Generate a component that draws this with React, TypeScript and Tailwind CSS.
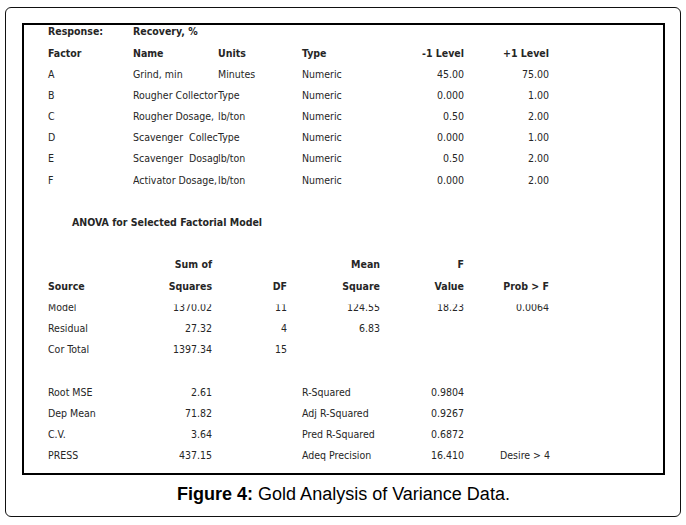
import React from 'react';

type Cell = { text: string; w: string; right?: boolean; bold?: boolean; clip?: boolean };

const factors = [
  ['A', 'Grind, min', 'Minutes', 'Numeric', '45.00', '75.00'],
  ['B', 'Rougher Collector', 'Type', 'Numeric', '0.000', '1.00'],
  ['C', 'Rougher Dosage,', 'lb/ton', 'Numeric', '0.50', '2.00'],
  ['D', 'Scavenger  Collector', 'Type', 'Numeric', '0.000', '1.00'],
  ['E', 'Scavenger  Dosage,', 'lb/ton', 'Numeric', '0.50', '2.00'],
  ['F', 'Activator Dosage,', 'lb/ton', 'Numeric', '0.000', '2.00'],
];

const anova = [
  ['Model', '1370.02', '11', '124.55', '18.23', '0.0064'],
  ['Residual', '27.32', '4', '6.83', '', ''],
  ['Cor Total', '1397.34', '15', '', '', ''],
];

const stats = [
  ['Root MSE', '2.61', 'R-Squared', '0.9804', ''],
  ['Dep Mean', '71.82', 'Adj R-Squared', '0.9267', ''],
  ['C.V.', '3.64', 'Pred R-Squared', '0.6872', ''],
  ['PRESS', '437.15', 'Adeq Precision', '16.410', 'Desire > 4'],
];

const Row = ({ cells, cut }: { cells: Cell[]; cut?: boolean }) => (
  <div className="flex h-[21.2px] items-center pl-[24px]">
    {cells.map((c, i) => (
      <div
        key={i}
        className={`${c.w} shrink-0 whitespace-pre ${c.right ? 'text-right' : 'text-left'} ${c.bold ? 'font-bold' : ''} ${c.clip ? 'overflow-hidden' : ''}`}
      >
        <span className={cut ? 'inline-block leading-[14px] [clip-path:inset(4.5px_0_0_0)]' : ''}>{c.text}</span>
      </div>
    ))}
  </div>
);

const Blank = () => <div className="h-[21.2px]" />;

const App: React.FC = () => {
  const top = ['w-[85px]', 'w-[85px]', 'w-[84px]', 'w-[90px]', 'w-[72px]', 'w-[85px]'];
  const mid = ['w-[85px]', 'w-[79px]', 'w-[75px]', 'w-[93px]', 'w-[84px]', 'w-[85px]'];

  return (
    <div className="w-[686px] h-[525px] bg-white pt-[7px] pl-[5px]">
      <div className="w-[676px] h-[510px] border border-[#111] rounded-[6px] pt-[15px] pl-[16px]">
        {/* tabla del informe */}
        <div
          className="w-[643px] h-[452px] border-2 border-black overflow-hidden text-[10.5px] text-[#262626]"
          style={{ fontFamily: '"DejaVu Sans Condensed", "Liberation Sans", sans-serif' }}
        >
          <div className="-mt-[3.4px]">
            <Row
              cells={[
                { text: 'Response:', w: top[0], bold: true },
                { text: 'Recovery, %', w: top[1], bold: true },
              ]}
            />
            <Row
              cells={[
                { text: 'Factor', w: top[0], bold: true },
                { text: 'Name', w: top[1], bold: true },
                { text: 'Units', w: top[2], bold: true },
                { text: 'Type', w: top[3], bold: true },
                { text: '-1 Level', w: top[4], bold: true, right: true },
                { text: '+1 Level', w: top[5], bold: true, right: true },
              ]}
            />
            {factors.map((f) => (
              <Row
                key={f[0]}
                cells={[
                  { text: f[0], w: top[0] },
                  { text: f[1], w: top[1], clip: true },
                  { text: f[2], w: top[2] },
                  { text: f[3], w: top[3] },
                  { text: f[4], w: top[4], right: true },
                  { text: f[5], w: top[5], right: true },
                ]}
              />
            ))}
            <Blank />
            <div className="flex h-[21.2px] items-center pl-[48px] font-bold">ANOVA for Selected Factorial Model</div>
            <Blank />
            <Row
              cells={[
                { text: '', w: mid[0] },
                { text: 'Sum of', w: mid[1], bold: true, right: true },
                { text: '', w: mid[2] },
                { text: 'Mean', w: mid[3], bold: true, right: true },
                { text: 'F', w: mid[4], bold: true, right: true },
              ]}
            />
            <Row
              cells={[
                { text: 'Source', w: mid[0], bold: true },
                { text: 'Squares', w: mid[1], bold: true, right: true },
                { text: 'DF', w: mid[2], bold: true, right: true },
                { text: 'Square', w: mid[3], bold: true, right: true },
                { text: 'Value', w: mid[4], bold: true, right: true },
                { text: 'Prob > F', w: mid[5], bold: true, right: true },
              ]}
            />
            {anova.map((a, i) => (
              <Row
                key={a[0]}
                cut={i === 0}
                cells={[
                  { text: a[0], w: mid[0] },
                  { text: a[1], w: mid[1], right: true },
                  { text: a[2], w: mid[2], right: true },
                  { text: a[3], w: mid[3], right: true },
                  { text: a[4], w: mid[4], right: true },
                  { text: a[5], w: mid[5], right: true },
                ]}
              />
            ))}
            <Blank />
            {stats.map((s) => (
              <Row
                key={s[0]}
                cells={[
                  { text: s[0], w: 'w-[85px]' },
                  { text: s[1], w: 'w-[79px]', right: true },
                  { text: '', w: 'w-[90px]' },
                  { text: s[2], w: 'w-[90px]' },
                  { text: s[3], w: 'w-[72px]', right: true },
                  { text: s[4], w: 'w-[85px] pl-[36px]' },
                ]}
              />
            ))}
          </div>
        </div>
        <div
          className="w-[643px] mt-[9px] text-center text-[18px] leading-[21px] text-black"
          style={{ fontFamily: '"Liberation Sans", Arial, sans-serif' }}
        >
          <span className="font-bold">Figure 4:</span> Gold Analysis of Variance Data.
        </div>
      </div>
    </div>
  );
};

export default App;
